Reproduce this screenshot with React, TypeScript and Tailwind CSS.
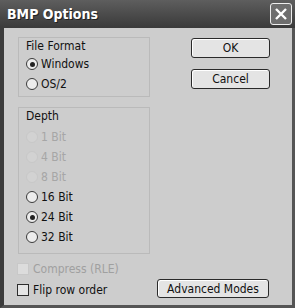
import React from "react";

function Radio({ label, checked, disabled }: { label: string; checked?: boolean; disabled?: boolean }) {
  return (
    <div className="flex h-[20px] items-center">
      <span
        className={`flex h-[12px] w-[12px] items-center justify-center rounded-full border ${
          disabled ? "border-[#c8c8c8] bg-[#d2d2d2]" : "border-[#3a3a3a] bg-[#ececec]"
        }`}
      >
        {checked ? <span className="h-[5px] w-[5px] rounded-full bg-[#222]" /> : null}
      </span>
      <span className={`ml-[3px] text-[12px] ${disabled ? "text-[#a6a6a6]" : "text-[#111]"}`}>{label}</span>
    </div>
  );
}

function Check({ label, disabled }: { label: string; disabled?: boolean }) {
  return (
    <div className="flex h-[20px] items-center">
      <span
        className={`h-[12px] w-[12px] border ${
          disabled ? "border-[#c8c8c8] bg-[#dcdcdc]" : "border-[#2e2e2e] bg-[#e6e6e6]"
        }`}
      />
      <span className={`ml-[4px] text-[12px] ${disabled ? "text-[#a0a0a0]" : "text-[#111]"}`}>{label}</span>
    </div>
  );
}

function Button({ children, className }: { children: React.ReactNode; className?: string }) {
  return (
    <div
      className={`flex items-center justify-center rounded-[3px] border border-[#2a2a2a] bg-[#e4e4e4] text-[12px] text-[#111] shadow-[inset_1px_1px_0_#fff] ${className ?? ""}`}
    >
      {children}
    </div>
  );
}

export default function App() {
  return (
    <div
      className="flex h-[308px] w-[295px] flex-col bg-[#cdcdcd]"
      style={{ fontFamily: "'DejaVu Sans Condensed', 'Liberation Sans', sans-serif" }}
    >
      {/* title bar */}
      <div className="flex h-[28px] items-center justify-between bg-gradient-to-b from-[#5e5e5e] to-[#3a3a3a] pl-[7px] pr-[3px]">
        <span className="text-[14px] font-bold text-white [text-shadow:1px_1px_0_#222]">BMP Options</span>
        <div className="flex h-[22px] w-[22px] items-center justify-center rounded-[3px] border border-[#eee] bg-[#6e6e6e]">
          <svg width="14" height="14" viewBox="0 0 14 14">
            <path d="M2 2 L12 12 M12 2 L2 12" stroke="#fff" strokeWidth="2.4" />
          </svg>
        </div>
      </div>

      {/* body */}
      <div className="flex flex-1 border-b-[3px] border-l-[4px] border-r-[3px] border-b-[#555] border-l-[#3c3c3c] border-r-[#555]">
        <div className="ml-[14px] flex w-[132px] flex-col">
          {/* file format */}
          <div className="mt-[9px] h-[60px] border border-[#bababa] pl-[7px]">
            <div className="flex h-[16px] items-center text-[12px] text-[#111]">File Format</div>
            <Radio label="Windows" checked />
            <Radio label="OS/2" />
          </div>

          {/* depth */}
          <div className="mt-[10px] h-[147px] border border-[#bababa] pl-[7px]">
            <div className="flex h-[16px] items-center text-[12px] text-[#111]">Depth</div>
            <div className="mt-[3px]">
              <Radio label="1 Bit" disabled />
              <Radio label="4 Bit" disabled />
              <Radio label="8 Bit" disabled />
              <Radio label="16 Bit" />
              <Radio label="24 Bit" checked />
              <Radio label="32 Bit" />
            </div>
          </div>

          <div className="-ml-[1px] mt-[5px]">
            <Check label="Compress (RLE)" disabled />
            <div className="mt-[1px]">
              <Check label="Flip row order" />
            </div>
          </div>
        </div>

        <div className="ml-[7px] flex flex-1 flex-col">
          <Button className="ml-[34px] mt-[10px] h-[20px] w-[79px]">OK</Button>
          <Button className="ml-[34px] mt-[11px] h-[20px] w-[79px]">Cancel</Button>
          <Button className="mb-[7px] mt-auto h-[19px] w-[112px]">Advanced Modes</Button>
        </div>
      </div>
    </div>
  );
}
